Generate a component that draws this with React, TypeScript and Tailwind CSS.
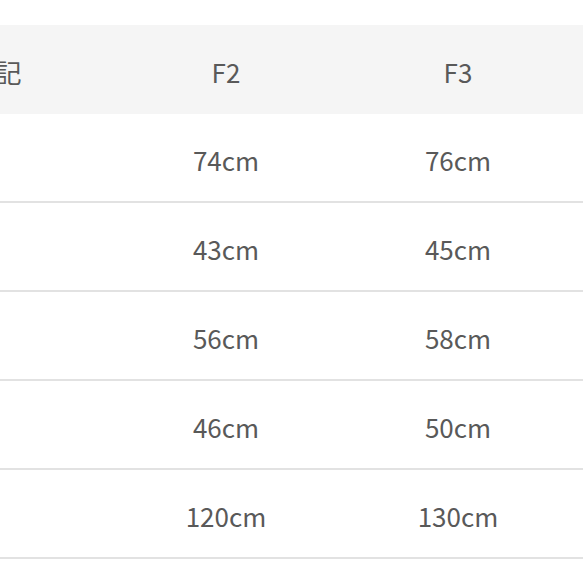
const columns = ["サイズ表記", "F2", "F3", ""]

const rows = [
  ["", "74cm", "76cm", ""],
  ["", "43cm", "45cm", ""],
  ["", "56cm", "58cm", ""],
  ["", "46cm", "50cm", ""],
  ["", "120cm", "130cm", ""],
]

const widths = ["w-[306px]", "w-[232px]", "w-[232px]", "w-[9px]"]

export default function App() {
  return (
    <div className="w-[583px] h-[583px] overflow-hidden bg-white font-['Noto_Sans_CJK_JP','Noto_Sans',sans-serif] text-[26px] text-[#595959]">
      <div className="mt-[25px] ml-[-196px] w-[779px]">
        <div className="flex h-[89px] bg-[#f5f5f5]">
          {columns.map((c, i) => (
            <div key={i} className={`${widths[i]} shrink-0 flex items-center justify-center pt-1 whitespace-nowrap`}>
              {c}
            </div>
          ))}
        </div>
        {rows.map((row, r) => (
          <div key={r} className="flex h-[89px] border-b-2 border-[#e2e2e2]">
            {row.map((cell, i) => (
              <div key={i} className={`${widths[i]} shrink-0 flex items-center justify-center pt-1`}>
                {cell}
              </div>
            ))}
          </div>
        ))}
      </div>
    </div>
  )
}
